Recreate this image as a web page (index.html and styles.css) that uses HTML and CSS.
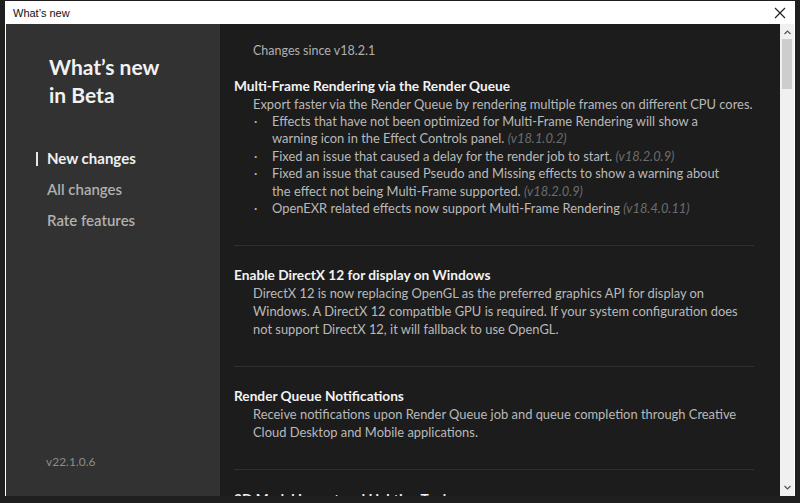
FILE: index.html
```html
<!DOCTYPE html>
<html>
<head>
<meta charset="utf-8">
<link rel="stylesheet" href="styles.css">
</head>
<body>
<div class="desktop">
  <div class="window">
    <div class="titlebar">
      <span class="title">What’s new</span>
      <svg class="close" width="12" height="12" viewBox="0 0 12 12"><path d="M1 1L11 11M11 1L1 11" stroke="#222" stroke-width="1.2" fill="none"/></svg>
    </div>
    <div class="frame">
      <aside class="sidebar">
        <h1 class="side-title">What’s new<br>in Beta</h1>
        <nav class="nav">
          <a class="nav-item active">New changes</a>
          <a class="nav-item">All changes</a>
          <a class="nav-item">Rate features</a>
        </nav>
        <div class="version">v22.1.0.6</div>
      </aside>
      <main class="main">
        <div class="since">Changes since v18.2.1</div>
        <section class="section">
          <h2 class="sec-title">Multi-Frame Rendering via the Render Queue</h2>
          <p class="sec-body">Export faster via the Render Queue by rendering multiple frames on different CPU cores.</p>
          <ul class="bullets">
            <li>Effects that have not been optimized for Multi-Frame Rendering will show a warning icon in the Effect Controls panel. <em class="ver">(v18.1.0.2)</em></li>
            <li>Fixed an issue that caused a delay for the render job to start. <em class="ver">(v18.2.0.9)</em></li>
            <li>Fixed an issue that caused Pseudo and Missing effects to show a warning about the effect not being Multi-Frame supported. <em class="ver">(v18.2.0.9)</em></li>
            <li>OpenEXR related effects now support Multi-Frame Rendering <em class="ver">(v18.4.0.11)</em></li>
          </ul>
        </section>
        <section class="section">
          <h2 class="sec-title">Enable DirectX 12 for display on Windows</h2>
          <p class="sec-body">DirectX 12 is now replacing OpenGL as the preferred graphics API for display on Windows. A DirectX 12 compatible GPU is required. If your system configuration does not support DirectX 12, it will fallback to use OpenGL.</p>
        </section>
        <section class="section">
          <h2 class="sec-title">Render Queue Notifications</h2>
          <p class="sec-body">Receive notifications upon Render Queue job and queue completion through Creative Cloud Desktop and Mobile applications.</p>
        </section>
        <section class="section">
          <h2 class="sec-title">3D Model Import and Lighting Tools</h2>
        </section>
      </main>
      <div class="scrollbar">
        <svg class="arrow" width="7" height="5" viewBox="0 0 7 5"><path d="M0.5 4L3.5 1L6.5 4" stroke="#555" stroke-width="1.2" fill="none"/></svg>
        <div class="thumb"></div>
        <div class="track"></div>
        <svg class="arrow" width="7" height="5" viewBox="0 0 7 5"><path d="M0.5 1L3.5 4L6.5 1" stroke="#555" stroke-width="1.2" fill="none"/></svg>
      </div>
    </div>
  </div>
</div>
</body>
</html>
```

FILE: styles.css
```css
* { box-sizing: border-box; }
html, body { margin: 0; padding: 0; }
body {
  width: 800px;
  height: 503px;
  overflow: hidden;
  background: #1f1f1f;
  font-family: Lato, "Open Sans", sans-serif;
}
.desktop {
  padding: 1px 5px 0 5px;
}
.window {
  width: 790px;
  height: 495px;
  display: flex;
  flex-direction: column;
  background: #ffffff;
}
.titlebar {
  height: 23px;
  flex: none;
  display: flex;
  align-items: center;
  justify-content: space-between;
  padding: 0 9px 0 8px;
  background: #ffffff;
}
.title {
  font-family: "Liberation Sans", Arial, sans-serif;
  font-size: 11px;
  color: #111;
}
.close { display: block; }
.frame {
  flex: 1;
  min-height: 0;
  display: flex;
  padding: 0 1px 0 1px;
}
.sidebar {
  width: 214px;
  flex: none;
  background: #323232;
  display: flex;
  flex-direction: column;
  padding: 29px 0 27px 0;
}
.side-title {
  margin: 0 0 0 43px;
  font-size: 21px;
  line-height: 28px;
  font-weight: 700;
  color: #f2f2f2;
}
.nav {
  margin-top: 34px;
  display: flex;
  flex-direction: column;
}
.nav-item {
  position: relative;
  margin-left: 41px;
  font-size: 15px;
  line-height: 31px;
  font-weight: 600;
  color: #b0b0b0;
}
.nav-item.active { color: #f0f0f0; font-weight: 700; }
.nav-item.active::before {
  content: "";
  position: absolute;
  left: -11px;
  top: 9px;
  width: 2px;
  height: 14px;
  background: #e8e8e8;
}
.version {
  margin-top: auto;
  margin-left: 40px;
  font-size: 12px;
  color: #8c8c8c;
}
.main {
  flex: 1;
  min-width: 0;
  background: #1c1c1c;
  overflow: hidden;
  padding: 18px 10px 0 14px;
}
.since {
  padding-left: 19px;
  font-size: 12.5px;
  line-height: 18px;
  color: #b0b0b0;
  margin-bottom: 17px;
}
.section {
  margin-right: 16px;
  border-bottom: 1px solid #2f2f2f;
  padding: 0 0 28px 0;
  margin-bottom: 20px;
}
.sec-title {
  margin: 0;
  font-size: 13.7px;
  line-height: 18px;
  font-weight: 700;
  color: #f2f2f2;
}
.sec-body {
  margin: 0 -1px 0 0;
  padding-left: 19px;
  font-size: 12.9px;
  line-height: 18px;
  color: #b9b9b9;
}
.bullets {
  margin: 0 24px 0 0;
  padding: 0 0 0 38px;
  list-style: none;
  font-size: 12.9px;
  line-height: 17.4px;
  color: #b9b9b9;
}
.bullets li { position: relative; }
.bullets li::before {
  content: "·";
  position: absolute;
  left: -18px;
  color: #b9b9b9;
}
.ver { color: #6c6c6c; }
.scrollbar {
  width: 14px;
  flex: none;
  background: #f0f0f0;
  display: flex;
  flex-direction: column;
  align-items: center;
  padding: 6px 0 6px 0;
}
.arrow { display: block; flex: none; }
.thumb {
  width: 10px;
  height: 50px;
  margin-top: 4px;
  background: #cdcdcd;
  flex: none;
}
.track { flex: 1; }
```
